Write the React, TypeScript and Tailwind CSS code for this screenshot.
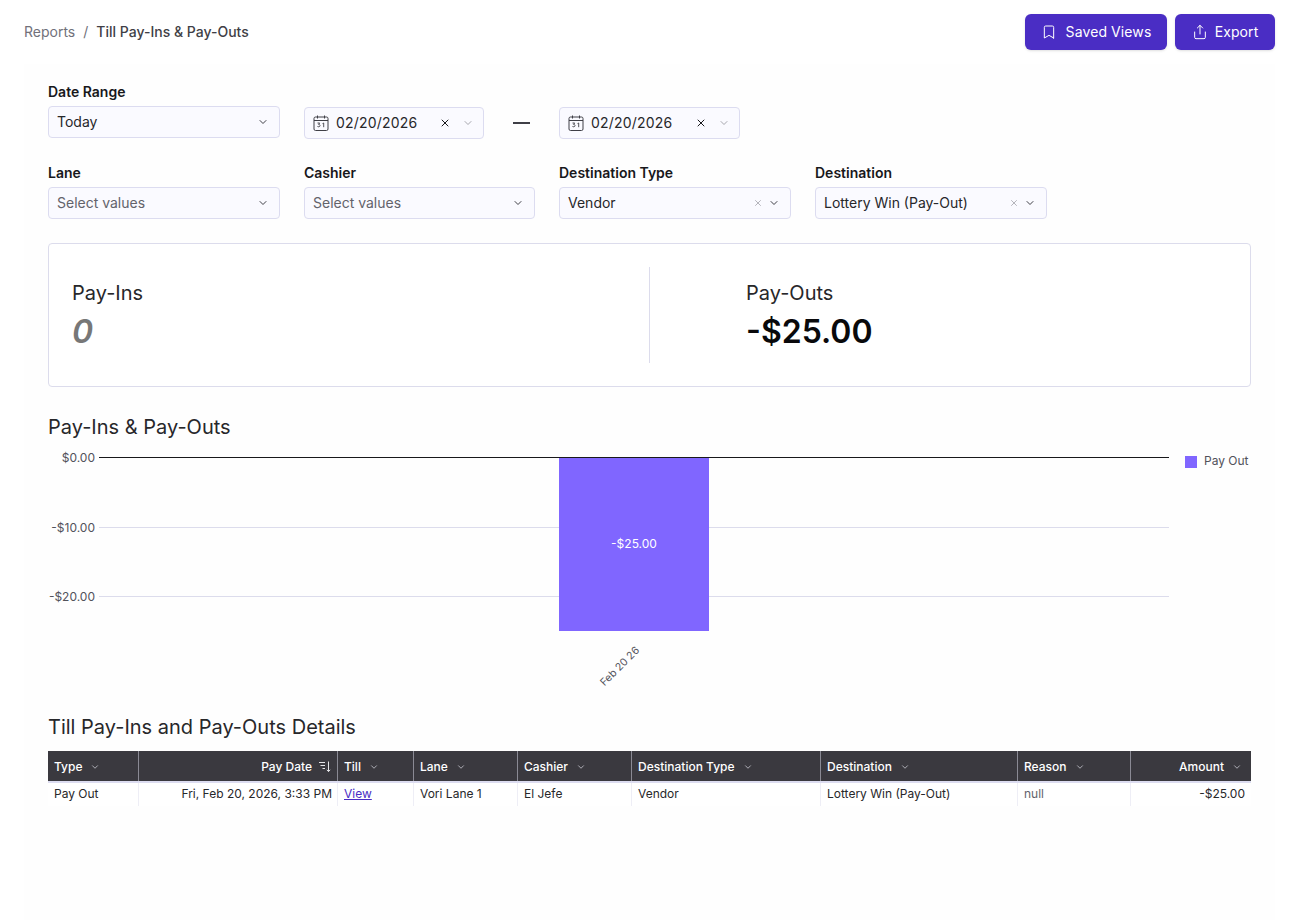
import { Bookmark, Share, ChevronDown, X } from "lucide-react";

const font = { fontFamily: "Inter, 'Liberation Sans', sans-serif" };

function CalendarIcon() {
  return (
    <svg width="16" height="16" viewBox="0 0 16 16" fill="none" stroke="#3f3f46" strokeWidth="1">
      <rect x="1" y="2" width="14" height="13.5" rx="1.5" />
      <path d="M1 5.5h14M4.5 .5v3M11.5 .5v3" />
      <path d="M4.5 8h2.2l-1.2 1.4c1.2 0 1.5.5 1.5 1.2s-.5 1.2-1.3 1.2-1.2-.4-1.3-.8M9.5 8.6l1.2-.6v4.2" strokeWidth="0.9" />
    </svg>
  );
}

function SortIcon() {
  return (
    <svg width="13" height="13" viewBox="0 0 13 13" fill="none" stroke="#e4e4e7" strokeWidth="1">
      <path d="M1 2.5h6M2.5 5.5h4.5M4.5 8.5h2.5M10.5 1.5v10M8.8 9.8l1.7 1.8 1.7-1.8" />
    </svg>
  );
}

function Select({ value, placeholder, clearable, width }: { value?: string; placeholder?: string; clearable?: boolean; width: string }) {
  return (
    <div className={`${width} h-8 flex items-center pl-2 pr-2.5 bg-[#fafaff] border border-[#dcdcf0] rounded text-sm`}>
      <span className={`flex-1 ${value ? "text-[#27272a]" : "text-[#63636b]"}`}>{value ?? placeholder}</span>
      {clearable && <X className="w-2.5 h-2.5 text-[#8a8a92] mr-[5px]" strokeWidth={1.5} />}
      <ChevronDown className="w-3 h-3 text-[#3f3f46]" strokeWidth={2} />
    </div>
  );
}

function DatePicker({ width }: { width: string }) {
  return (
    <div className={`${width} h-8 -mb-px flex items-center pl-2 pr-[9px] bg-[#fafaff] border border-[#dcdcf0] rounded text-sm text-[#27272a]`}>
      <CalendarIcon />
      <span className="ml-[7px] flex-1 tracking-[0.2px]">02/20/2026</span>
      <X className="w-3 h-3 text-[#18181b] mr-[11px]" strokeWidth={2} />
      <ChevronDown className="w-3 h-3 text-[#8a8a92]" strokeWidth={1.5} />
    </div>
  );
}

function Field({ label, children }: { label: string; children: React.ReactNode }) {
  return (
    <div className="flex flex-col">
      <label className="text-sm font-semibold leading-[18px] text-[#18181b] mb-[5px]">{label}</label>
      {children}
    </div>
  );
}

const cols = [
  { name: "Type", w: "w-[90px]", value: "Pay Out" },
  { name: "Pay Date", w: "w-[199px]", value: "Fri, Feb 20, 2026, 3:33 PM", right: true, sort: true, cell: "pr-[5px]" },
  { name: "Till", w: "w-[76px]", value: "View", link: true },
  { name: "Lane", w: "w-[104px]", value: "Vori Lane 1" },
  { name: "Cashier", w: "w-[114px]", value: "El Jefe" },
  { name: "Destination Type", w: "w-[189px]", value: "Vendor" },
  { name: "Destination", w: "w-[197px]", value: "Lottery Win (Pay-Out)" },
  { name: "Reason", w: "w-[113px]", value: "null", muted: true },
  { name: "Amount", w: "w-[121px]", value: "-$25.00", right: true, head: "pr-[9px]" },
];

function Chart() {
  const label = { fontFamily: "Inter, 'Liberation Sans', sans-serif", fontSize: 12, fill: "#52525b" };
  return (
    <svg width="1203" height="240" viewBox="0 0 1203 240" className="block">
      <line x1="51" x2="1121" y1="80.5" y2="80.5" stroke="#dcdcec" />
      <line x1="51" x2="1121" y1="149.5" y2="149.5" stroke="#dcdcec" />
      <rect x="511" y="10" width="150" height="174" fill="#8066ff" />
      <line x1="51" x2="1121" y1="10.5" y2="10.5" stroke="#18181b" />
      <text x="47" y="14.5" textAnchor="end" style={label}>$0.00</text>
      <text x="47" y="85" textAnchor="end" style={label}>-$10.00</text>
      <text x="47" y="154" textAnchor="end" style={label}>-$20.00</text>
      <text x="586" y="101" textAnchor="middle" style={{ ...label, fill: "#ffffff" }}>-$25.00</text>
      <text x="0" y="0" textAnchor="end" transform="translate(592 204) rotate(-45)" style={{ ...label, fontSize: 10.5 }}>Feb 20 26</text>
      <rect x="1137" y="9" width="12" height="12" fill="#8066ff" />
      <text x="1156" y="17.5" style={label}>Pay Out</text>
    </svg>
  );
}

export default function App() {
  return (
    <div className="min-h-[920px] bg-white text-[#18181b]" style={font}>
      <header className="h-[64px] pl-6 pr-7 pt-3.5 flex justify-between items-start bg-white">
        <nav className="h-9 flex items-center text-sm">
          <span className="text-[#71717a]">Reports</span>
          <span className="text-[#71717a] mx-2">/</span>
          <span className="text-[#3f3f46] font-medium">Till Pay-Ins &amp; Pay-Outs</span>
        </nav>
        <div className="flex gap-2">
          <button className="w-[142px] h-9 flex items-center justify-center gap-[9px] bg-[#4a2dc4] text-white text-sm rounded-md shadow-sm tracking-[0.1px]">
            <Bookmark className="w-4 h-4" strokeWidth={1.5} />
            Saved Views
          </button>
          <button className="w-[100px] h-9 flex items-center justify-center gap-[7px] bg-[#4a2dc4] text-white text-sm rounded-md shadow-sm tracking-[0.1px]">
            <Share className="w-4 h-4" strokeWidth={1.5} />
            Export
          </button>
        </div>
      </header>

      <main className="ml-6 mr-7 px-6 pt-[19px] min-h-[856px] bg-[#fefefe]">
        <div className="flex items-end">
          <Field label="Date Range">
            <Select value="Today" width="w-[232px]" />
          </Field>
          <div className="ml-6">
            <DatePicker width="w-[180px]" />
          </div>
          <div className="w-[75px] h-8 flex items-center justify-center">
            <div className="w-[17px] h-0.5 mt-0.5 bg-[#3f3f46]" />
          </div>
          <DatePicker width="w-[181px]" />
        </div>

        <div className="flex gap-6 mt-[26px]">
          <Field label="Lane">
            <Select placeholder="Select values" width="w-[232px]" />
          </Field>
          <Field label="Cashier">
            <Select placeholder="Select values" width="w-[231px]" />
          </Field>
          <Field label="Destination Type">
            <Select value="Vendor" clearable width="w-[232px]" />
          </Field>
          <Field label="Destination">
            <Select value="Lottery Win (Pay-Out)" clearable width="w-[232px]" />
          </Field>
        </div>

        <section className="mt-6 w-[1203px] h-[144px] flex items-center bg-white border border-[#dcdcec] rounded">
          <div className="w-[601px] h-[96px] pl-[23px] border-r border-[#dcdcec] flex flex-col justify-center">
            <div className="text-xl leading-7 mb-[5px] text-[#27272a]">Pay-Ins</div>
            <div className="text-[32px] leading-[40px] font-semibold italic text-[#777777]">0</div>
          </div>
          <div className="pl-24">
            <div className="text-xl leading-7 mb-[5px] text-[#27272a]">Pay-Outs</div>
            <div className="text-[32px] leading-[40px] font-semibold text-[#09090b]">-$25.00</div>
          </div>
        </section>

        <h2 className="mt-[26px] text-xl leading-7 text-[#27272a]">Pay-Ins &amp; Pay-Outs</h2>
        <div className="mt-[6px]">
          <Chart />
        </div>

        <h2 className="mt-[26px] text-xl leading-7 text-[#27272a]">Till Pay-Ins and Pay-Outs Details</h2>
        <div className="mt-[10px] w-[1203px]">
          <div className="flex h-[32px] bg-[#3a393f] border-b-2 border-[#dcdcf0] box-border">
            {cols.map((c, i) => (
              <div
                key={c.name}
                className={`${c.w} px-1.5 pt-px flex items-center gap-1.5 text-xs font-medium text-white ${c.right ? "justify-end" : ""} ${c.head ?? ""} ${i > 0 ? "border-l border-[#8a8a94]" : ""}`}
              >
                {c.name}
                {c.sort ? <SortIcon /> : <ChevronDown className="w-2.5 h-2.5 text-[#c4c4cc] ml-0.5" strokeWidth={2} />}
              </div>
            ))}
          </div>
          <div className="flex h-[23px] bg-white">
            {cols.map((c, i) => (
              <div
                key={c.name}
                className={`${c.w} px-1.5 pb-0.5 flex items-center text-xs ${c.right ? "justify-end" : ""} ${c.cell ?? ""} ${i > 0 ? "border-l border-[#eeeef6]" : ""} ${c.muted ? "text-[#63636b]" : "text-[#27272a]"}`}
              >
                {c.link ? <a className="text-[#4a2dc4] underline">{c.value}</a> : c.value}
              </div>
            ))}
          </div>
        </div>
      </main>
    </div>
  );
}
